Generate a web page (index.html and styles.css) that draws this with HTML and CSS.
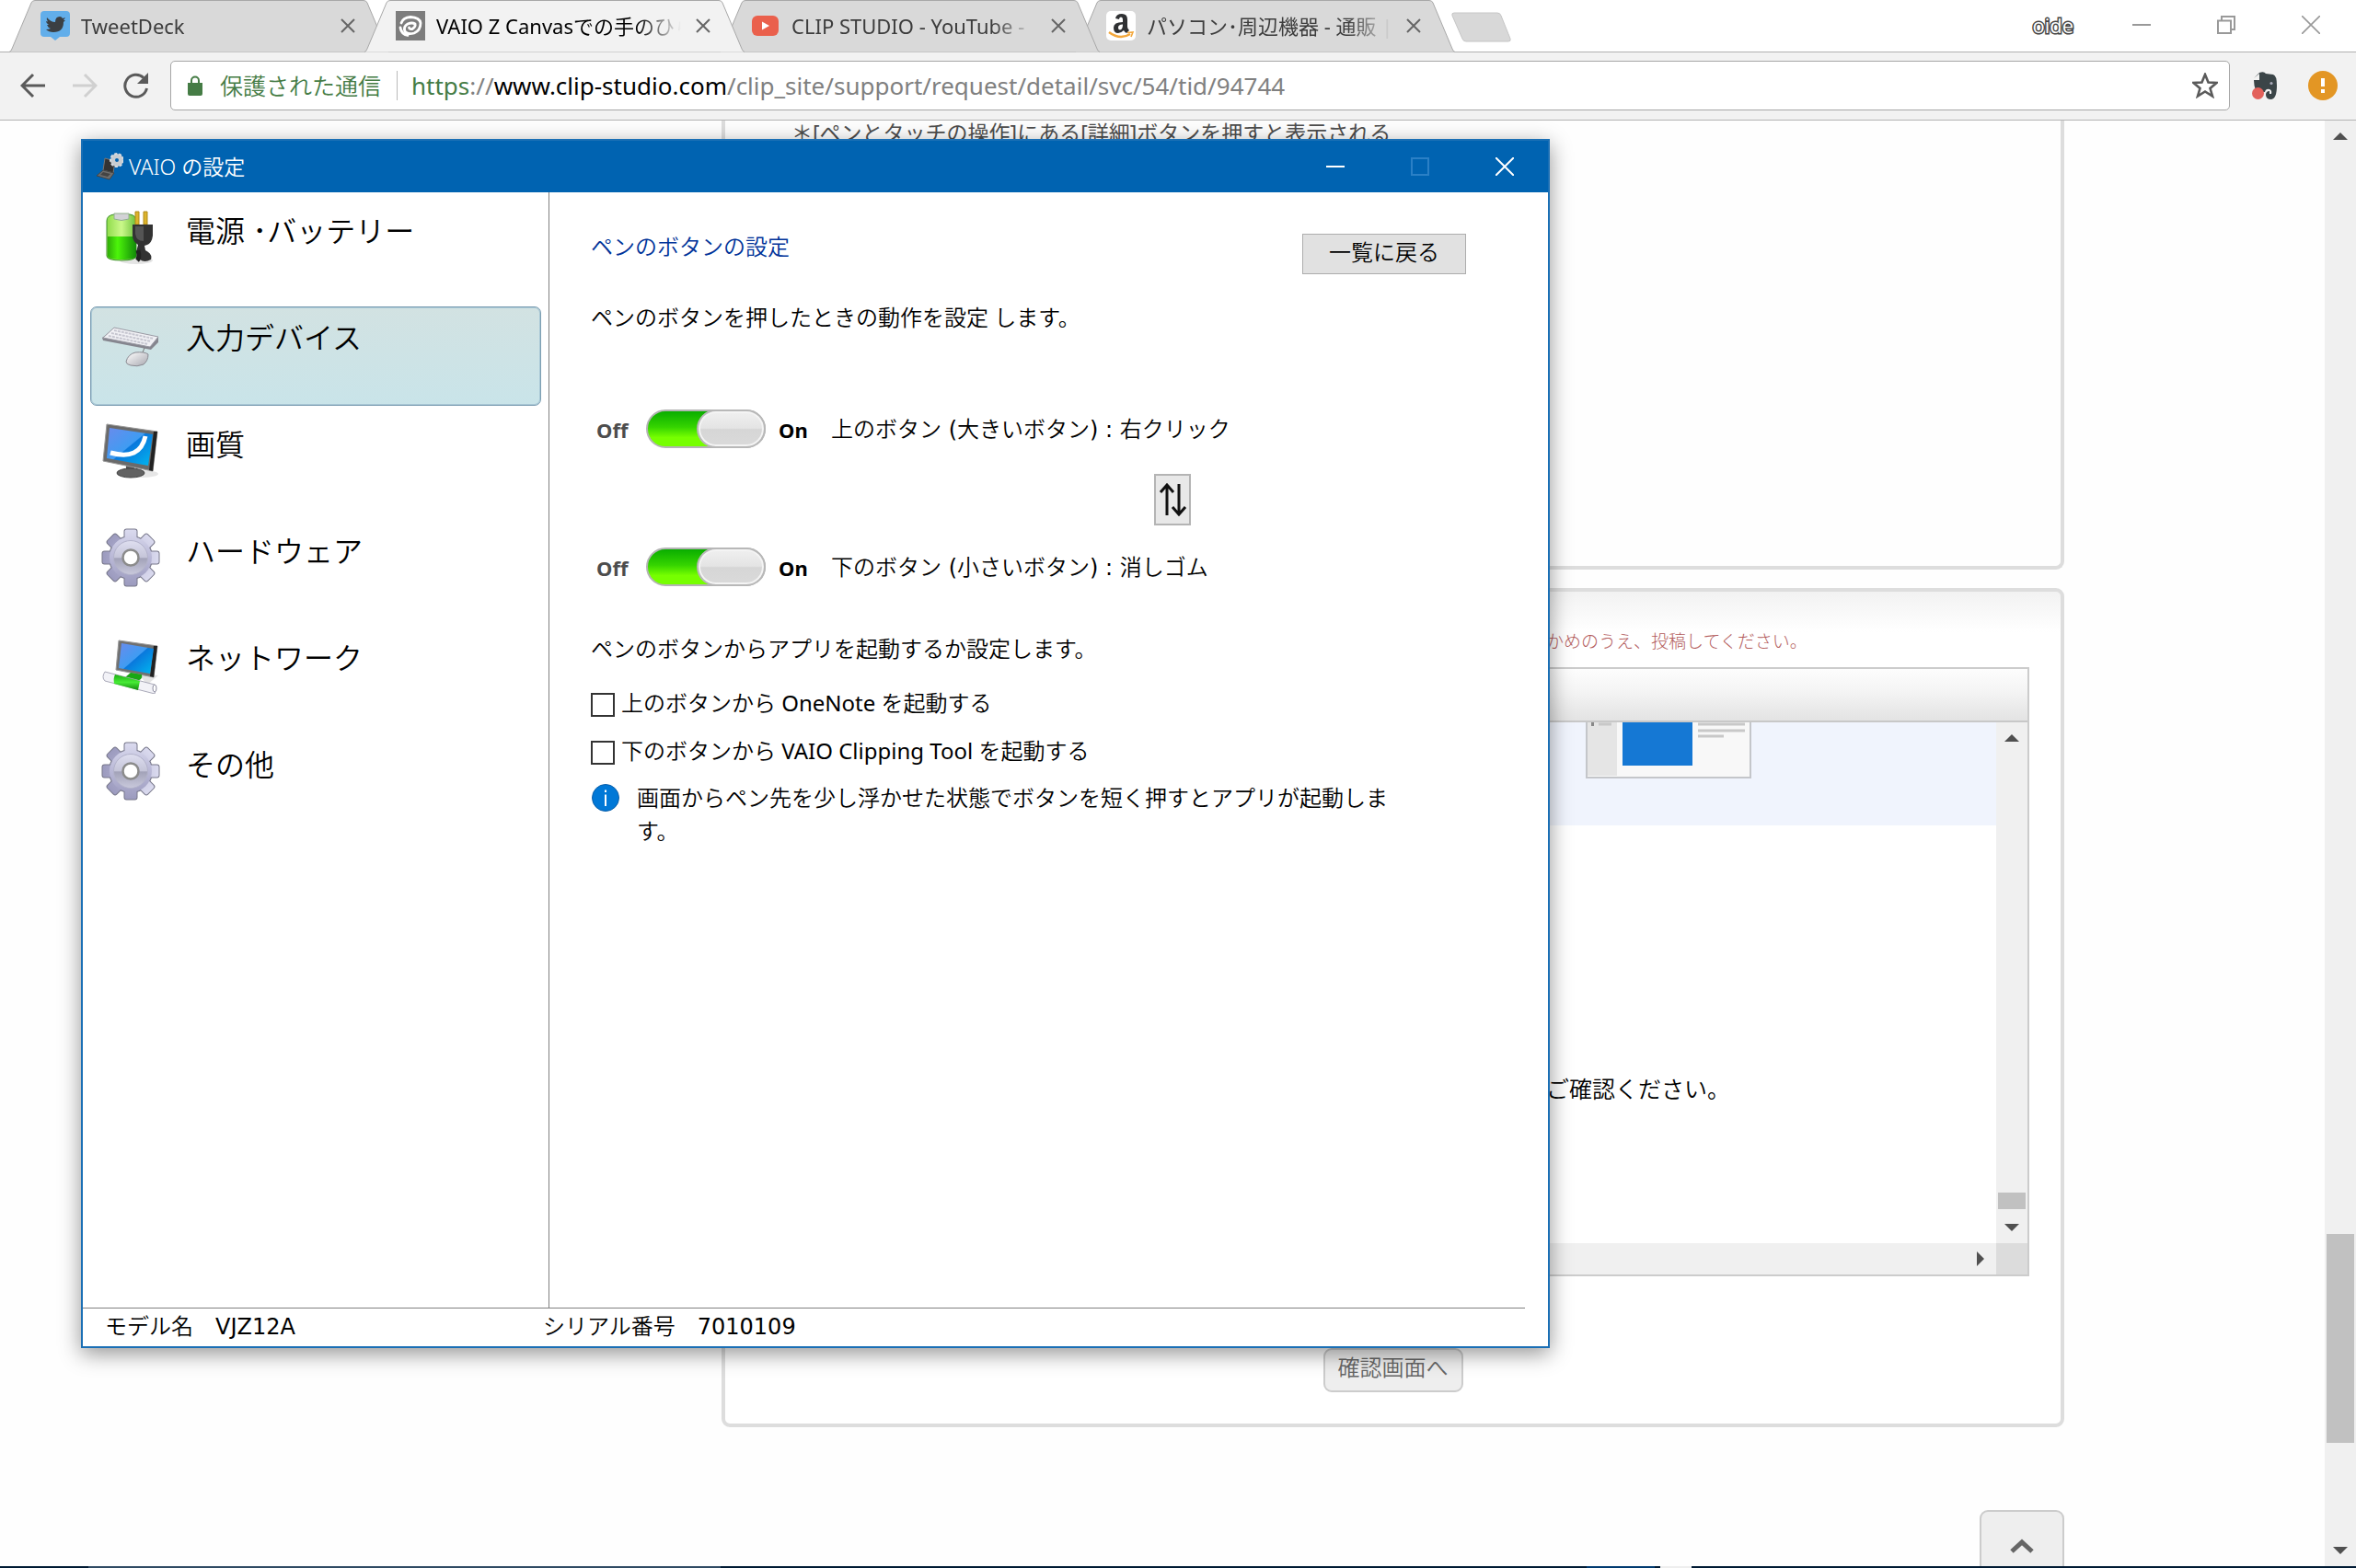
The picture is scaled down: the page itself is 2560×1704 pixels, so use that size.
FILE: index.html
```html
<!DOCTYPE html>
<html lang="ja">
<head>
<meta charset="utf-8">
<title>VAIO Z Canvasでの手のひら</title>
<link rel="stylesheet" href="styles.css">
</head>
<body>
<svg class="defs" aria-hidden="true">
  <defs>
    <linearGradient id="gearFill" x1="0" y1="0" x2="0" y2="64" gradientUnits="userSpaceOnUse"><stop offset="0" stop-color="#dcdcf0"/><stop offset=".5" stop-color="#b9b8d6"/><stop offset="1" stop-color="#9a99bd"/></linearGradient>
    <linearGradient id="gearDisc" x1="0" y1="0" x2="0" y2="1"><stop offset="0" stop-color="#dfdff0"/><stop offset=".5" stop-color="#c4c4d8"/><stop offset=".52" stop-color="#a2a2b8"/><stop offset="1" stop-color="#c9c9dc"/></linearGradient>
    <linearGradient id="screen" x1="0" y1="0" x2="1" y2="1"><stop offset="0" stop-color="#6a8bec"/><stop offset=".48" stop-color="#3f9cf2"/><stop offset=".5" stop-color="#0a78dc"/><stop offset="1" stop-color="#00b8f0"/></linearGradient>
    <linearGradient id="cell" x1="0" y1="0" x2="1" y2="0"><stop offset="0" stop-color="#2fae08"/><stop offset=".35" stop-color="#4cf50a"/><stop offset="1" stop-color="#128a08"/></linearGradient>
    <linearGradient id="cellTop" x1="0" y1="0" x2="1" y2="0"><stop offset="0" stop-color="#8fdc4a"/><stop offset=".5" stop-color="#cbf98a"/><stop offset="1" stop-color="#6cc03c"/></linearGradient>
    <linearGradient id="plastic" x1="0" y1="0" x2="1" y2="1"><stop offset="0" stop-color="#fff"/><stop offset="1" stop-color="#a8a8b0"/></linearGradient>
    <linearGradient id="cable" x1="0" y1="0" x2="0" y2="1"><stop offset="0" stop-color="#1fae14"/><stop offset=".5" stop-color="#46ea35"/><stop offset="1" stop-color="#128a0c"/></linearGradient>
    <g id="teeth"><rect x="25.500" y="1.500" width="13" height="61" rx="2"/><rect x="25.500" y="1.500" width="13" height="61" rx="2" transform="rotate(45 32 32)"/><rect x="25.500" y="1.500" width="13" height="61" rx="2" transform="rotate(90 32 32)"/><rect x="25.500" y="1.500" width="13" height="61" rx="2" transform="rotate(135 32 32)"/><circle cx="32" cy="32" r="23"/></g>
    <symbol id="gear" viewBox="0 0 64 64"><use href="#teeth" fill="#777" stroke="#77778a" stroke-width="2"/><use href="#teeth" fill="url(#gearFill)"/><circle cx="32" cy="32" r="18.500" fill="url(#gearDisc)" stroke="#b3b3cb"/><circle cx="32" cy="32" r="8.500" fill="#fff" stroke="#8b8b8b" stroke-width="2.500"/></symbol>
    <symbol id="cross" viewBox="0 0 20 20"><path d="M3 3L17 17M17 3L3 17" fill="none" stroke="currentColor"/></symbol>
  </defs>
</svg>

<header class="tabstrip">
  <div class="tabs" role="tablist">
    <div class="tab" role="tab">
      <svg class="tab-bg" viewBox="0 0 413 57"><path d="M0 56.500Q2 56 3 53L24 3Q25 .5 28 .5H385Q388 .5 389 3L410 53Q411 56 413 56.500"/></svg>
      <div class="tab-row">
        <svg class="favicon" viewBox="0 0 32 32"><path d="M4 0H28Q32 0 32 4V24Q32 28 28 28H21L16 32 11 28H4Q0 28 0 24V4Q0 0 4 0Z" fill="#62aeea"/><path d="M7 7Q11 12 16 12 16 6 21 6 23 6 24 8L27 7 25 10 27 10 25 12Q25 23 14 23 9 23 6 20 9 20 11 19 8 18 7 15H9Q6 13 6 11L8 11.500Q6 9 7 7Z" fill="#3b3f43"/></svg>
        <span class="tab-title">TweetDeck</span>
        <button class="tab-close" aria-label="閉じる"><svg viewBox="0 0 20 20"><use href="#cross"/></svg></button>
      </div>
    </div>
    <div class="tab active" role="tab" aria-selected="true">
      <svg class="tab-bg" viewBox="0 0 413 57"><path d="M0 56.500Q2 56 3 53L24 3Q25 .5 28 .5H385Q388 .5 389 3L410 53Q411 56 413 56.500"/></svg>
      <div class="tab-row">
        <svg class="favicon" viewBox="0 0 32 32"><path d="M0 0H32V32H0Z" fill="#7d7d7d"/><path d="M6 13Q8 7 16 6.500 26 7 27 13 27 21 20 24 13 26 10 22 8 17 13 14 18 12 21 14 22 17 18 19.500 15 20 14.500 18M5 18Q6 25 13 26.500" fill="none" stroke="#fff" stroke-width="2.800" stroke-linecap="round"/></svg>
        <span class="tab-title">VAIO Z Canvasでの手のひら</span>
        <button class="tab-close" aria-label="閉じる"><svg viewBox="0 0 20 20"><use href="#cross"/></svg></button>
      </div>
    </div>
    <div class="tab third" role="tab">
      <svg class="tab-bg" viewBox="0 0 413 57"><path d="M0 56.500Q2 56 3 53L24 3Q25 .5 28 .5H385Q388 .5 389 3L410 53Q411 56 413 56.500"/></svg>
      <div class="tab-row">
        <svg class="favicon" viewBox="0 0 32 32"><rect x="1" y="5" width="29" height="22" rx="6" fill="#ea604c"/><path d="M12 11.500V20.500L20 16Z" fill="#fff"/></svg>
        <span class="tab-title">CLIP STUDIO - YouTube -</span>
        <button class="tab-close" aria-label="閉じる"><svg viewBox="0 0 20 20"><use href="#cross"/></svg></button>
      </div>
    </div>
    <div class="tab" role="tab">
      <svg class="tab-bg" viewBox="0 0 413 57"><path d="M0 56.500Q2 56 3 53L24 3Q25 .5 28 .5H385Q388 .5 389 3L410 53Q411 56 413 56.500"/></svg>
      <div class="tab-row">
        <svg class="favicon" viewBox="0 0 32 32"><rect width="32" height="32" rx="5" fill="#fff"/><path d="M10 8Q11 3 17 3 23 3 23 9V17Q23 19 25 21L22 24Q20 23 19 21 16 24 13 24 8 24 8 18 8 12 18 12V9Q18 6.500 16 6.500 14 6.500 14 9ZM18 14.500Q13 14.500 13 18 13 20.500 15 20.500 18 20 18 14.500Z" fill="#2f3133" fill-rule="evenodd"/><path d="M3 23Q15 32 26 25" fill="none" stroke="#f3a73b" stroke-width="2.400"/><path d="M23 23.500L29 23 27 28" fill="none" stroke="#f3a73b" stroke-width="1.600"/></svg>
        <span class="tab-title">パソコン･周辺機器 - 通販 |</span>
        <button class="tab-close" aria-label="閉じる"><svg viewBox="0 0 20 20"><use href="#cross"/></svg></button>
      </div>
    </div>
    <button class="new-tab" aria-label="新しいタブ"><svg viewBox="0 0 68 36"><path d="M4 1H51Q54 1 55 4L65 29Q66 32 63 32H17Q14 32 13 29L2 4Q1 1 4 1Z" fill="#d8d8d8" stroke="#c6c6c6"/></svg></button>
  </div>
  <div class="frame-controls">
    <span class="profile">oide</span>
    <button aria-label="最小化"><svg viewBox="0 0 20 20"><path d="M0 10H20" stroke="#999" stroke-width="2"/></svg></button>
    <button aria-label="元に戻す"><svg viewBox="0 0 20 20"><path d="M1 5.500H15V19H1ZM5 5V1H19V15H15" fill="none" stroke="#999" stroke-width="2"/></svg></button>
    <button aria-label="閉じる"><svg viewBox="0 0 20 20"><path d="M0 0L20 20M20 0L0 20" stroke="#999" stroke-width="1.600"/></svg></button>
  </div>
</header>

<div class="toolbar">
  <button class="tool" aria-label="戻る"><svg viewBox="0 0 28 28"><path d="M27 14H3M14 2L2 14 14 26" fill="none" stroke="#5a5a5a" stroke-width="3"/></svg></button>
  <button class="tool" aria-label="進む"><svg viewBox="0 0 28 28"><path d="M1 14H25M14 2L26 14 14 26" fill="none" stroke="#d0d0d0" stroke-width="3"/></svg></button>
  <button class="tool" aria-label="再読み込み"><svg viewBox="0 0 28 28"><path d="M25.500 17A12 12 0 1 1 22 5.500" fill="none" stroke="#5a5a5a" stroke-width="3"/><path d="M27 0V12H15Z" fill="#5a5a5a"/></svg></button>
  <div class="omnibox">
    <svg class="lock" viewBox="0 0 16 22"><path d="M0 8H16V20Q16 22 14 22H2Q0 22 0 20Z" fill="#457c45"/><path d="M4 9V5.500A4 4 0 0 1 12 5.500V9" fill="none" stroke="#457c45" stroke-width="2"/></svg>
    <span class="secure">保護された通信</span>
    <div class="url" role="textbox" aria-label="アドレス"><span class="scheme">https</span>://<span class="host">www.clip-studio.com</span>/clip_site/support/request/detail/svc/54/tid/94744</div>
    <button class="star" aria-label="ブックマーク"><svg viewBox="0 0 28 28"><path d="M14 2L17.500 10.500 26.500 11 19.500 17 22 25.500 14 20.500 6 25.500 8.500 17 1.500 11 10.500 10.500Z" fill="none" stroke="#5a5a5a" stroke-width="2.600"/></svg></button>
  </div>
  <button class="ext" aria-label="クリッパー"><svg viewBox="0 0 32 32"><path d="M3 8L9 2Q14 0 16 3L24 4Q28 5 28 16 28 30 22 31 16 31 16 26 16 22 20 22V25H22Q23 21 20 20 16 19 15 23 8 24 5 21 3 16 3 10H9V3" fill="#3b4548"/><circle cx="22" cy="13.500" r="1.600" fill="#aab"/><circle cx="7.500" cy="24.500" r="6.500" fill="#e3615b"/></svg></button>
  <button class="ext" aria-label="更新"><svg viewBox="0 0 32 32"><circle cx="16" cy="16" r="16" fill="#e39624"/><path d="M16 8V17M16 20V24" stroke="#fff" stroke-width="4"/></svg></button>
</div>

<div class="viewport">
  <main class="page">
    <div class="site">
      <section class="panel article"><p>＊[ペンとタッチの操作]にある[詳細]ボタンを押すと表示される</p></section>
      <section class="panel post">
        <p class="notice">かめのうえ、投稿してください。</p>
        <div class="editor">
          <div class="editor-tools"></div>
          <div class="editor-body">
            <div class="editor-text">
              <div class="quote">
                <svg class="thumb" viewBox="0 0 180 61"><path d="M1 0V60H179V0" fill="#f8f8f8" stroke="#c4c6ca" stroke-width="2"/><path d="M2 0H34V58H2Z" fill="#e5e5e5"/><path d="M40 0H116V47H40Z" fill="#1578d4"/><path d="M14 2H28M122 2H173M122 9H173M122 15H150" stroke="#c8c8c8" stroke-width="3"/><path d="M6 0H9V4H6Z" fill="#888"/></svg>
              </div>
              <p>ご確認ください。</p>
            </div>
            <div class="scroll-v inner"><i class="up"></i><b></b><i class="down"></i></div>
            <div class="scroll-h"><i class="right"></i></div>
            <div class="corner"></div>
          </div>
        </div>
        <button class="confirm">確認画面へ</button>
      </section>
      <button class="to-top" aria-label="ページの先頭へ"><svg viewBox="0 0 28 18"><path d="M3 15L14 5 25 15" fill="none" stroke="#666" stroke-width="5"/></svg></button>
    </div>
  </main>
  <div class="scroll-v outer"><i class="up"></i><b></b><i class="down"></i></div>

  <section class="window" aria-label="VAIO の設定">
    <header class="titlebar">
      <svg class="app-icon" viewBox="0 0 30 30"><path d="M10 6L21 9 19 22 8 19Z" fill="#333" stroke="#777"/><path d="M8 19L20 22 15 29 1 25Z" fill="#6e6e6e" stroke="#444"/><path d="M8 21L16 23 13 26 5 24Z" fill="#444"/><circle cx="23" cy="8" r="4.500" fill="none" stroke="#c8cdd2" stroke-width="5"/><circle cx="23" cy="8" r="7" fill="none" stroke="#d8dde2" stroke-width="2" stroke-dasharray="3 2"/></svg>
      <h1>VAIO の設定</h1>
      <button aria-label="最小化"><svg viewBox="0 0 20 20"><path d="M0 10H20" stroke="#fff" stroke-width="2"/></svg></button>
      <button aria-label="最大化" disabled><svg viewBox="0 0 20 20"><path d="M1 1H19V19H1Z" fill="none" stroke="#2b80c6" stroke-width="2"/></svg></button>
      <button aria-label="閉じる"><svg viewBox="0 0 20 20"><path d="M0 0L20 20M20 0L0 20" stroke="#fff" stroke-width="2"/></svg></button>
    </header>
    <div class="window-body">
      <nav class="side">
        <button><svg viewBox="0 0 64 64"><ellipse cx="38" cy="57" rx="18" ry="4" fill="#e4e4e4"/><path d="M6 14Q6 8 14 7H31Q38 8 38 14V52Q38 57 22 57 6 57 6 52Z" fill="url(#cellTop)" stroke="#3c8f2c"/><path d="M7 31H38V52Q38 56 22 56 7 56 7 52Z" fill="url(#cell)"/><path d="M14 6H30V12Q22 15 14 12Z" fill="#d2d2d6" stroke="#8fb08a"/><path d="M37 4H41V18H37ZM46 4H50V18H46Z" fill="#dcb32c" stroke="#b08a18"/><path d="M34 18H56V30Q55 38 50 40L47 41 48 46Q56 50 54 56 47 60 42 56L38 48 40 40Q34 36 34 30Z" fill="#333"/><path d="M37 20H46V36Q38 36 37 28Z" fill="#555"/><path d="M40 46Q42 54 39 57" fill="none" stroke="#222" stroke-width="5"/></svg><span>電源 ･バッテリー</span></button>
        <button class="selected"><svg viewBox="0 0 64 64"><path d="M14 15L62 25 62 30 54 38 2 28 1 25Z" fill="#85858e"/><path d="M14 14L62 24 53 35 2 25Z" fill="#f1f1f5" stroke="#9a9aa4"/><path d="M14 17L57 26M11 20L54 29M8 23L51 32" stroke="#c6c6d0" stroke-width="2" stroke-dasharray="3 1"/><path d="M45 41L47 36" stroke="#777" fill="none"/><path d="M27 51Q29 43 37 41 47 40 51 43 51 50 46 54 39 57 32 55 27 54 27 51Z" fill="url(#plastic)" stroke="#8a8a92"/></svg><span>入力デバイス</span></button>
        <button><svg viewBox="0 0 64 64"><ellipse cx="44" cy="57" rx="18" ry="4" fill="#e6e6e6"/><path d="M27 46H36V58H27Z" fill="#555"/><ellipse cx="32" cy="56" rx="15" ry="5" fill="#626262" stroke="#444"/><path d="M6 3L61 11 56 54 2 43Z" fill="#6a6a6a" stroke="#999"/><path d="M57 11L61 11 56 54 52 53Z" fill="#222"/><path d="M9 7L56 14 51 48 6 40Z" fill="url(#screen)"/><path d="M10 34Q42 43 48 16" fill="none" stroke="#fff" stroke-width="5"/></svg><span>画質</span></button>
        <button><svg viewBox="0 0 64 64"><use href="#gear"/></svg><span>ハードウェア</span></button>
        <button><svg viewBox="0 0 64 64"><path d="M40 42L62 44 50 54Z" fill="#e4e4e4"/><path d="M19 6L61 12 57 46 16 38Z" fill="#707070" stroke="#999"/><path d="M57 12L61 12 57 46 53 45Z" fill="#222"/><path d="M22 9L57 15 53 42 19 36Z" fill="url(#screen)"/><path d="M32 41L44 43Q46 49 36 51L26 46Z" fill="#19a714"/><path d="M4 40L58 54Q61 58 58 64L4 50Q0 46 4 40Z" fill="#f2f2f7" stroke="#a9a9b8"/><path d="M15 43L42 50 40 60 14 53Q13 47 15 43Z" fill="url(#cable)"/><ellipse cx="58" cy="58" rx="2" ry="4" fill="#fff" stroke="#8d8da0"/></svg><span>ネットワーク</span></button>
        <button><svg viewBox="0 0 64 64"><use href="#gear"/></svg><span>その他</span></button>
      </nav>
      <div class="pane">
        <div class="pane-head"><h2>ペンのボタンの設定</h2><button class="back">一覧に戻る</button></div>
        <p class="lead">ペンのボタンを押したときの動作を設定 します。</p>
        <div class="switch-row"><span class="off">Off</span><input type="checkbox" role="switch" id="upper" checked><span class="on">On</span><label for="upper">上のボタン<span class="wide"> (</span>大きいボタン<span class="wide">) : </span>右クリック</label></div>
        <button class="swap" aria-label="入れ替え"><svg viewBox="0 0 32 36"><path d="M10 35V3M3 10L10 2 17 10M23 1V33M16 26L23 34 30 26" fill="none" stroke="#111" stroke-width="3"/></svg></button>
        <div class="switch-row"><span class="off">Off</span><input type="checkbox" role="switch" id="lower" checked><span class="on">On</span><label for="lower">下のボタン<span class="wide"> (</span>小さいボタン<span class="wide">) : </span>消しゴム</label></div>
        <p class="launch">ペンのボタンからアプリを起動するか設定します。</p>
        <div class="check-row"><input type="checkbox" id="onenote"><label for="onenote">上のボタンから <span class="latin">OneNote</span> を起動する</label></div>
        <div class="check-row"><input type="checkbox" id="clip"><label for="clip">下のボタンから <span class="latin">VAIO Clipping Tool</span> を起動する</label></div>
        <div class="info"><svg viewBox="0 0 30 30"><circle cx="15" cy="15" r="14.500" fill="#0078d7" stroke="#0a5ea8"/><path d="M15 6.500V9M15 11.500V24" stroke="#fff" stroke-width="2"/></svg><p>画面からペン先を少し浮かせた状態でボタンを短く押すとアプリが起動します。</p></div>
      </div>
    </div>
    <footer class="status"><p>モデル名<b>VJZ12A</b></p><p>シリアル番号<b>7010109</b></p></footer>
  </section>
</div>
<div class="taskbar"><i class="idle"></i><i class="run"></i><i class="open"></i></div>
</body>
</html>
```
FILE: styles.css
```css
* { box-sizing: border-box; }
body {
  margin: 0;
  height: 100vh;
  display: flex;
  flex-direction: column;
  overflow: hidden;
  background: #fff;
  color: #000;
  font: 350 24px/36px "Noto Sans", "Noto Sans CJK JP", sans-serif;
}
p, h1, h2 { margin: 0; font: inherit; }
button { margin: 0; padding: 0; border: 0; background: none; color: inherit; font: inherit; }
svg { display: block; flex: none; }
.defs { position: absolute; width: 0; height: 0; }

/* tab strip */
.tabstrip {
  display: flex;
  justify-content: space-between;
  height: 57px;
  border-bottom: 1px solid #b0b0b0;
  flex: none;
}
.tabs { display: flex; padding-left: 10px; }
.tab { display: grid; grid-template-columns: minmax(0, 1fr); width: 413px; height: 57px; margin-right: -27px; position: relative; font-size: 22px; font-weight: 400; color: #3c3c3c; }
.tab > * { grid-area: 1 / 1; }
.tab.third { z-index: 1; }
.tab.active { z-index: 2; color: #000; }
.tab-bg { width: 413px; height: 57px; fill: #d9d9d9; stroke: #a8a8a8; }
.tab.active .tab-bg { fill: #f2f2f2; }
.tab-row { display: flex; align-items: center; padding: 0 34px; height: 56px; position: relative; }
.favicon { width: 32px; height: 32px; }
.tab-title {
  flex: 1;
  margin-left: 12px;
  white-space: nowrap;
  overflow: hidden;
  mask-image: linear-gradient(to right, #000 calc(100% - 48px), transparent);
}
.tab-close { width: 20px; height: 20px; margin: 0 1px 0 14px; color: #666; }
.tab-close svg { width: 20px; height: 20px; stroke-width: 2; }
.new-tab { width: 68px; height: 36px; margin: 13px 0 0 22px; }
.new-tab svg { width: 68px; }
.frame-controls { display: flex; align-items: center; height: 54px; padding-right: 3px; }
.frame-controls button { width: 92px; display: grid; place-items: center; }
.frame-controls svg { width: 20px; height: 20px; }
.profile { margin-right: 28px; font: 22px/32px "Open Sans", sans-serif; color: #fff; -webkit-text-stroke: 3px #444; paint-order: stroke; }

/* toolbar */
.toolbar {
  display: flex;
  align-items: center;
  height: 74px;
  padding: 0 20px 2px 22px;
  background: #f2f2f2;
  border-bottom: 1px solid #b3b3b3;
  flex: none;
}
.tool { width: 28px; margin-right: 28px; }
.tool + .tool + .tool { margin-right: 23px; }
.omnibox {
  flex: 1;
  display: flex;
  align-items: center;
  height: 54px;
  padding: 0 12px 0 18px;
  border: 1px solid #a6a6a6;
  border-radius: 5px;
  background: #fff;
}
.lock { width: 16px; height: 22px; }
.secure { margin-left: 19px; padding-right: 17px; font-size: 25px; line-height: 32px; color: #457c45; border-right: 1px solid #bbb; }
.url { flex: 1; margin-left: 15px; font-size: 26px; font-weight: 400; color: #808080; white-space: nowrap; }
.scheme { color: #457c45; }
.host { color: #000; }
.star { width: 28px; }
.ext { width: 32px; margin-left: 23px; }
.ext + .ext { margin-left: 30px; }

/* web page */
.viewport { flex: 1; min-height: 0; display: flex; position: relative; overflow: hidden; }
.page { flex: 1; overflow: hidden; background: #fefefe; }
.site { max-width: 1960px; margin: 0 auto; padding-left: 501px; display: flex; flex-direction: column; }
.panel { border: 4px solid #ddd; border-radius: 9px; }
.article { height: 488px; margin-bottom: 20px; padding: 0 72px; border-top: 0; border-radius: 0 0 9px 9px; color: #4d4d4d; font-size: 23px; font-weight: 400; }
.article p { line-height: 26px; }
.post {
  display: flex;
  flex-direction: column;
  height: 912px;
  padding: 36px 34px 0;
  background: linear-gradient(#f2f2f2, #fff 44px);
}
.notice { margin-bottom: 10px; padding-left: 858px; font-size: 19px; font-weight: 300; color: #b35c5c; }
.editor { display: flex; flex-direction: column; height: 662px; border: 2px solid #ccc; }
.editor-tools { height: 58px; border-bottom: 2px solid #c8c8c8; background: linear-gradient(#fdfdfd, #f5f5f5 40%, #e3e3e3); }
.editor-body { flex: 1; display: grid; grid-template: minmax(0, 1fr) 34px / minmax(0, 1fr) 34px; }
.quote { height: 112px; padding-left: 899px; background: #f0f4fd; }
.thumb { width: 180px; height: 61px; }
.editor-text p { margin-top: 268px; padding-left: 856px; font-size: 25px; }
.scroll-h { display: flex; justify-content: flex-end; align-items: center; padding-right: 13px; background: #f0f0f0; }
.corner { background: #dcdcdc; }
.scroll-v { display: grid; width: 34px; background: #f0f0f0; justify-items: center; align-items: center; }
.scroll-v b { width: 30px; align-self: stretch; background: #c1c1c1; grid-row: 3; }
.scroll-v .down { grid-row: 5; }
.inner { grid-template-rows: 34px 477fr 18fr 3fr 34px; }
.outer { grid-template-rows: 34px 1176fr 227fr 100fr 34px; flex: none; }
.up, .down { width: 16px; height: 8px; background: #505050; clip-path: polygon(50% 0, 100% 100%, 0 100%); }
.down { clip-path: polygon(0 0, 100% 0, 50% 100%); }
.right { width: 8px; height: 16px; background: #505050; clip-path: polygon(0 0, 100% 50%, 0 100%); }
.confirm { align-self: center; width: 152px; height: 48px; margin-top: 78px; padding-bottom: 6px; border: 2px solid #ccc; border-radius: 9px; background: #eee; color: #666; }
.to-top { align-self: flex-end; display: grid; place-items: center; width: 92px; height: 78px; margin-top: 90px; border: 2px solid #ccc; border-radius: 9px; background: #eee; }
.to-top svg { width: 28px; }

/* settings window floating over the browser */
.window {
  position: absolute;
  left: 88px;
  top: 20px;
  width: 1596px;
  height: 1314px;
  display: flex;
  flex-direction: column;
  border: 2px solid #1a6fb5;
  background: #fff;
  box-shadow: 0 6px 22px rgba(0, 0, 0, .42);
}
.titlebar { display: flex; align-items: center; height: 56px; padding: 0 1px 0 14px; background: #0063b1; color: #fff; font-size: 23px; }
.titlebar h1 { flex: 1; margin-left: 6px; }
.titlebar button { width: 92px; display: grid; place-items: center; }
.titlebar button svg { width: 20px; height: 20px; }
.app-icon { width: 30px; height: 30px; }
.window-body { flex: 1; display: grid; grid-template-columns: 507px minmax(0, 1fr); }
.side { display: flex; flex-direction: column; gap: 8px; padding: 8px; border-right: 1px solid #808080; }
.side button { display: flex; height: 108px; padding: 8px 11px; border: 1px solid transparent; border-radius: 7px; font-size: 32px; line-height: 50px; text-align: left; }
.side svg { width: 64px; height: 64px; margin-right: 28px; }
.side .selected { border-color: #7c9db2; background: linear-gradient(#d2e2e2, #c9e4e9); box-shadow: inset 0 0 0 1px #a9c8d6; }
.pane { padding: 45px 89px 0 45px; }
.pane-head { display: flex; justify-content: space-between; align-items: flex-start; }
.pane-head h2 { line-height: 28px; color: #039; }
.back { width: 178px; height: 44px; padding-bottom: 4px; border: 1px solid #adadad; background: #e1e1e1; }
.lead { margin: 29px 0 82px; }
.switch-row { display: flex; align-items: center; height: 42px; padding-left: 6px; }
.wide { font-family: "DejaVu Sans", sans-serif; font-weight: 400; }
.off, .on { padding-top: 2px; font: 700 22px/36px "Noto Sans", sans-serif; }
.off { width: 54px; color: #4d4d4d; }
.on { width: 57px; margin-left: 14px; }
.switch-row input {
  appearance: none;
  width: 130px;
  height: 42px;
  margin: 0;
  border: 2px solid #b4b4b4;
  border-radius: 21px;
  background: linear-gradient(#0aad00, #35d400 45%, #76ff00 75%);
  display: flex;
  justify-content: flex-end;
}
.switch-row input::after {
  content: "";
  width: 71px;
  margin: -2px;
  border: 2px solid #b8b8b8;
  border-radius: 21px;
  background: linear-gradient(#f0f0f0, #e4e4e4 48%, #d6d6d6 52%, #dadada);
  box-shadow: inset 0 0 0 2px #f4f4f4;
}
.swap { display: grid; place-items: center; width: 40px; height: 56px; margin: 28px 0 24px 612px; border: 2px solid #b4b4b4; background: #e8e8e8; }
.swap svg { width: 32px; height: 36px; }
.launch { margin: 50px 0 30px; }
.check-row { display: flex; height: 26px; margin-bottom: 26px; }
.check-row label { line-height: 22px; }
.check-row input { appearance: none; width: 26px; height: 26px; margin: 0 7px 0 0; border: 2px solid #333; background: #fff; }
.latin { font-weight: 400; }
.info { display: flex; align-items: flex-start; margin-top: -8px; }
.info svg { width: 30px; margin: 3px 19px 0 1px; }
.info p { max-width: 820px; line-break: anywhere; }
.status { display: grid; grid-template-columns: 476px 1fr; height: 42px; margin-right: 25px; padding: 1px 0 0 24px; border-top: 1px solid #808080; }
.status b { margin-left: 24px; font: 24px/36px "DejaVu Sans", sans-serif; }

.taskbar { display: flex; height: 2px; background: #001a33; flex: none; }
.idle { width: 687px; margin-left: 96px; background: #2f4a63; }
.run { width: 74px; margin-left: 941px; background: #003a70; }
.open { width: 34px; margin-left: 6px; background: #eee; }
```
